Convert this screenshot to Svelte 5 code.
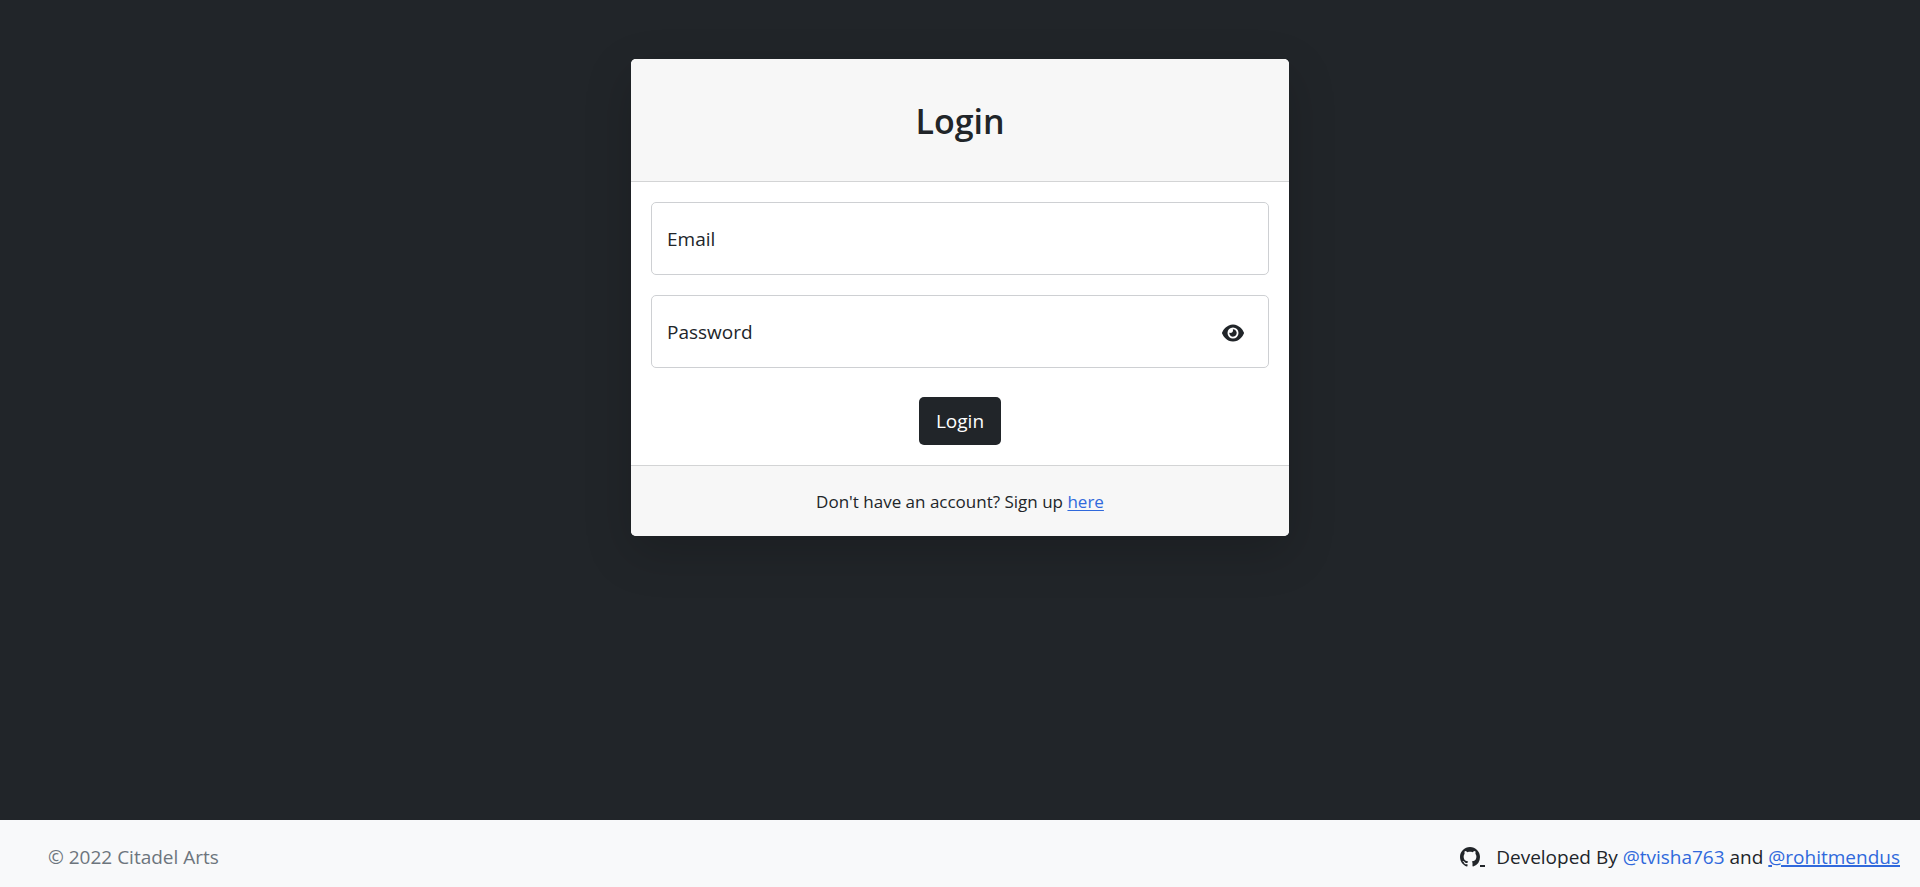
<script lang="ts">
	let email = '';
	let password = '';
	let showPassword = false;

	function handleSubmit() {
		if (!email || !password) {
			return;
		}
	}
</script>

<div class="page">
	<main>
		<div class="card">
			<div class="card-header">
				<h1>Login</h1>
			</div>

			<form class="card-body" on:submit|preventDefault={handleSubmit}>
				<div class="field">
					<input id="email" type="email" bind:value={email} />
					<label for="email">Email</label>
				</div>

				<div class="field">
					<input
						id="password"
						type={showPassword ? 'text' : 'password'}
						value={password}
						on:input={(e) => (password = e.currentTarget.value)}
					/>
					<label for="password">Password</label>
					<button
						type="button"
						class="toggle"
						aria-label="Show password"
						on:click={() => (showPassword = !showPassword)}
					>
						<svg viewBox="0 0 576 512" width="22" height="20" fill="currentColor" aria-hidden="true">
							<path
								d="M288 32c-80.8 0-145.5 36.8-192.6 80.6C48.6 156 17.3 208 2.5 243.7c-3.3 7.9-3.3 16.7 0 24.6C17.3 304 48.6 356 95.4 399.4C142.5 443.2 207.2 480 288 480s145.5-36.8 192.6-80.6c46.8-43.5 78.1-95.4 93-131.1c3.3-7.9 3.3-16.7 0-24.6c-14.9-35.7-46.2-87.7-93-131.1C433.5 68.8 368.8 32 288 32zM144 256a144 144 0 1 1 288 0 144 144 0 1 1 -288 0zm144-64c0 35.3-28.7 64-64 64c-7.1 0-13.9-1.2-20.3-3.3c-5.5-1.8-11.9 1.6-11.7 7.4c.3 6.9 1.3 13.8 3.2 20.7c13.7 51.2 66.4 81.6 117.6 67.9s81.6-66.4 67.9-117.6c-11.1-41.5-47.8-69.4-88.6-71.1c-5.8-.2-9.2 6.1-7.4 11.7c2.1 6.4 3.3 13.2 3.3 20.3z"
							/>
						</svg>
					</button>
				</div>

				<button type="submit" class="submit">Login</button>
			</form>

			<div class="card-footer">
				Don't have an account? Sign up <a href="/signup">here</a>
			</div>
		</div>
	</main>

	<footer>
		<span class="copyright">© 2022 Citadel Arts</span>
		<div class="credits">
			<a class="github" href="/source" aria-label="GitHub">
				<svg viewBox="0 0 16 16" width="20" height="20" fill="currentColor" aria-hidden="true">
					<path
						d="M8 0C3.58 0 0 3.58 0 8c0 3.54 2.29 6.53 5.47 7.59.4.07.55-.17.55-.38 0-.19-.01-.82-.01-1.49-2.01.37-2.53-.49-2.69-.94-.09-.23-.48-.94-.82-1.13-.28-.15-.68-.52-.01-.53.63-.01 1.08.58 1.23.82.72 1.21 1.87.87 2.33.66.07-.52.28-.87.51-1.07-1.78-.2-3.64-.89-3.64-3.95 0-.87.31-1.59.82-2.15-.08-.2-.36-1.02.08-2.12 0 0 .67-.21 2.2.82.64-.18 1.32-.27 2-.27.68 0 1.36.09 2 .27 1.53-1.04 2.2-.82 2.2-.82.44 1.1.16 1.92.08 2.12.51.56.82 1.27.82 2.15 0 3.07-1.87 3.75-3.65 3.95.29.25.54.73.54 1.48 0 1.07-.01 1.93-.01 2.2 0 .21.15.46.55.38A8.012 8.012 0 0 0 16 8c0-4.42-3.58-8-8-8z"
					/>
				</svg><span class="tail"></span>
			</a>
			<span>
				Developed By <a class="plain" href="/tvisha763">@tvisha763</a> and
				<a class="author" href="/rohitmendus">@rohitmendus</a>
			</span>
		</div>
	</footer>
</div>

<style>
	:global(body) {
		background: #212529;
	}

	.page {
		display: flex;
		flex-direction: column;
		min-height: 100vh;
		font-family: 'Segoe UI', 'Open Sans', 'Noto Sans', sans-serif;
		font-size: 19px;
		line-height: 30px;
		color: #212529;
	}

	main {
		flex: 1;
		padding: 59px 20px;
	}

	.card {
		max-width: 658px;
		margin: 0 auto;
		background: #fff;
		border-radius: 5px;
		box-shadow: 0 16px 48px rgba(0, 0, 0, 0.18);
		overflow: hidden;
	}

	.card-header {
		padding: 41px 20px 38px;
		background: #f7f7f7;
		border-bottom: 1px solid #d3d4d5;
		text-align: center;
	}

	h1 {
		margin: 0;
		font-size: 34px;
		font-weight: 600;
		line-height: 43px;
	}

	.card-body {
		display: flex;
		flex-direction: column;
		gap: 20px;
		padding: 20px;
	}

	.field {
		display: grid;
		grid-template-columns: 1fr auto;
		align-items: center;
	}

	.field input {
		grid-area: 1 / 1 / 2 / 3;
		box-sizing: border-box;
		width: 100%;
		height: 73px;
		padding: 28px 64px 8px 16px;
		border: 1px solid #ced0d3;
		border-radius: 5px;
		background: #fff;
		font: inherit;
		color: inherit;
	}

	.field label {
		grid-area: 1 / 1;
		padding-left: 16px;
		pointer-events: none;
	}

	.toggle {
		grid-area: 1 / 2;
		display: flex;
		margin-right: 25px;
		padding: 2px 0 0;
		border: 0;
		background: none;
		color: inherit;
		cursor: pointer;
	}

	.submit {
		align-self: center;
		margin-top: 9px;
		padding: 9px 17px;
		border: 0;
		border-radius: 5px;
		background: #212529;
		color: #fff;
		font: inherit;
		cursor: pointer;
	}

	.card-footer {
		padding: 21px 20px 19px;
		background: #f7f7f7;
		border-top: 1px solid #d3d4d5;
		font-size: 17px;
		text-align: center;
	}

	a {
		color: #3069dc;
		text-underline-offset: 2px;
	}

	footer {
		display: flex;
		flex-wrap: wrap;
		justify-content: space-between;
		padding: 22px 20px 15px 48px;
		background: #f8f9fa;
	}

	.copyright {
		color: #6c757d;
	}

	.credits {
		display: flex;
		align-items: center;
		gap: 11px;
	}

	.github {
		display: flex;
		align-items: flex-end;
		color: #212529;
	}

	.tail {
		width: 5px;
		height: 2px;
		background: currentColor;
	}

	.plain {
		text-decoration: none;
	}

	.author {
		text-decoration-thickness: 2px;
		text-underline-offset: 1px;
	}
</style>
